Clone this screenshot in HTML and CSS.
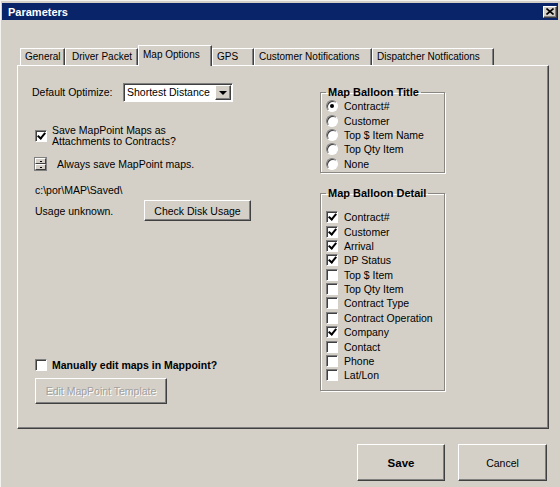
FILE: index.html
```html
<!DOCTYPE html>
<html>
<head>
    <title>Parameters</title>
    <link rel="stylesheet" href="styles.css">
</head>
<body>
    <div class="window">
        <div class="titlebar">
            <span class="title">Parameters</span>
            <span class="close-btn">
                <svg width="8" height="7" viewBox="0 0 8 7"><path d="M0.5 0.5 L7.5 6.5 M7.5 0.5 L0.5 6.5" stroke="#000" stroke-width="1.6"/></svg>
            </span>
        </div>
        <div class="content">
            <div class="tabs">
                <div class="tab tab-general">General</div>
                <div class="tab tab-driver">Driver Packet</div>
                <div class="tab tab-map active">Map Options</div>
                <div class="tab tab-gps">GPS</div>
                <div class="tab tab-customer">Customer Notifications</div>
                <div class="tab tab-dispatcher">Dispatcher Notfications</div>
            </div>
            <div class="panel">
                <div class="left-col">
                    <div class="optimize-row">
                        <span class="field-label">Default Optimize:</span>
                        <div class="select">
                            <span class="select-value">Shortest Distance</span>
                            <span class="select-arrow"></span>
                        </div>
                    </div>
                    <div class="check-row attach-row">
                        <span class="chk on"></span>
                        <span class="check-text">Save MapPoint Maps as<br>Attachments to Contracts?</span>
                    </div>
                    <div class="spin-row">
                        <span class="spinner">
                            <span class="spin-btn spin-up"></span>
                            <span class="spin-btn spin-down"></span>
                        </span>
                        <span>Always save MapPoint maps.</span>
                    </div>
                    <div class="path-text">c:\por\MAP\Saved\</div>
                    <div class="usage-row">
                        <span class="usage-text">Usage unknown.</span>
                        <button class="btn btn-disk">Check Disk Usage</button>
                    </div>
                    <div class="check-row manual-row">
                        <span class="chk"></span>
                        <span class="bold-text">Manually edit maps in Mappoint?</span>
                    </div>
                    <button class="btn btn-template" disabled>Edit MapPoint Template</button>
                </div>
                <div class="right-col">
                    <fieldset class="group group-title">
                        <legend>Map Balloon Title</legend>
                        <div class="opt"><span class="radio on"></span>Contract#</div>
                        <div class="opt"><span class="radio"></span>Customer</div>
                        <div class="opt"><span class="radio"></span>Top $ Item Name</div>
                        <div class="opt"><span class="radio"></span>Top Qty Item</div>
                        <div class="opt"><span class="radio"></span>None</div>
                    </fieldset>
                    <fieldset class="group group-detail">
                        <legend>Map Balloon Detail</legend>
                        <div class="opt"><span class="chk on"></span>Contract#</div>
                        <div class="opt"><span class="chk on"></span>Customer</div>
                        <div class="opt"><span class="chk on"></span>Arrival</div>
                        <div class="opt"><span class="chk on"></span>DP Status</div>
                        <div class="opt"><span class="chk"></span>Top $ Item</div>
                        <div class="opt"><span class="chk"></span>Top Qty Item</div>
                        <div class="opt"><span class="chk"></span>Contract Type</div>
                        <div class="opt"><span class="chk"></span>Contract Operation</div>
                        <div class="opt"><span class="chk on"></span>Company</div>
                        <div class="opt"><span class="chk"></span>Contact</div>
                        <div class="opt"><span class="chk"></span>Phone</div>
                        <div class="opt"><span class="chk"></span>Lat/Lon</div>
                    </fieldset>
                </div>
            </div>
            <div class="footer">
                <button class="btn btn-save">Save</button>
                <button class="btn btn-cancel">Cancel</button>
            </div>
        </div>
    </div>
</body>
</html>
```

FILE: styles.css
```css
body {
    margin: 0;
    padding: 0;
    width: 560px;
    height: 487px;
    overflow: hidden;
    background-color: #d4d0c8;
    font-family: 'Liberation Sans', Arial, sans-serif;
    font-size: 10.5px;
    color: #000;
}

.window {
    height: 487px;
    box-sizing: border-box;
    border-top: 1px solid #f4f3ef;
    border-left: 1px solid #f4f3ef;
    padding: 2px 2px 0 1px;
}

.titlebar {
    height: 17px;
    background-color: #0a246a;
    display: flex;
    align-items: center;
    justify-content: space-between;
    padding: 0 1px 0 6px;
}

.title {
    color: #fff;
    font-weight: bold;
    font-size: 11px;
}

.close-btn {
    width: 14px;
    height: 12px;
    box-sizing: border-box;
    background-color: #d4d0c8;
    border: 1px solid;
    border-color: #fff #404040 #404040 #fff;
    box-shadow: inset -1px -1px #808080;
    display: flex;
    align-items: center;
    justify-content: center;
}

.content {
    padding-left: 15px;
}

/* tabs */
.tabs {
    display: flex;
    align-items: flex-end;
    height: 20px;
    margin-top: 25px;
    margin-left: 3px;
    position: relative;
    z-index: 1;
}

.tab {
    height: 17px;
    box-sizing: border-box;
    padding-left: 4px;
    font-size: 10px;
    line-height: 16px;
    border-top: 1px solid #fff;
    border-left: 1px solid #fff;
    border-right: 1px solid #404040;
    box-shadow: inset -1px 0 #808080;
    white-space: nowrap;
}

.tab.active {
    height: 21px;
    margin-bottom: -1px;
    line-height: 18px;
    background-color: #d4d0c8;
}

.tab-general { width: 45px; }
.tab-driver { width: 73px; padding-left: 6px; }
.tab-map { width: 74px; }
.tab-gps { width: 42px; }
.tab-customer { width: 118px; }
.tab-dispatcher { width: 122px; }

/* panel */
.panel {
    width: 532px;
    height: 364px;
    box-sizing: border-box;
    border: 1px solid;
    border-color: #fff #404040 #404040 #fff;
    box-shadow: inset -1px -1px #808080;
    display: flex;
    padding: 0 103px 24px 14px;
}

.left-col {
    flex: 1;
    display: flex;
    flex-direction: column;
    align-items: flex-start;
}

.right-col {
    width: 125px;
}

.optimize-row {
    display: flex;
    align-items: center;
    margin-top: 17px;
    height: 18px;
}

.field-label {
    width: 91px;
}

.select {
    width: 110px;
    height: 19px;
    box-sizing: border-box;
    background-color: #fff;
    border: 1px solid;
    border-color: #808080 #fff #fff #808080;
    box-shadow: inset 1px 1px #404040;
    display: flex;
    align-items: center;
    justify-content: space-between;
    padding: 1px 1px 1px 3px;
}

.select-value {
    line-height: 14px;
}

.select-arrow {
    width: 16px;
    height: 15px;
    box-sizing: border-box;
    background-color: #d4d0c8;
    border: 1px solid;
    border-color: #fff #404040 #404040 #fff;
    box-shadow: inset -1px -1px #808080;
    position: relative;
}

.select-arrow::after {
    content: '';
    position: absolute;
    left: 3px;
    top: 5px;
    border-left: 4px solid transparent;
    border-right: 4px solid transparent;
    border-top: 4px solid #000;
}

.check-row {
    display: flex;
    align-items: center;
    margin-left: 3px;
}

.attach-row {
    margin-top: 24px;
}

.check-text {
    line-height: 11px;
    margin-left: 5px;
}

.chk {
    width: 12px;
    height: 12px;
    box-sizing: border-box;
    background-color: #fff;
    border: 1px solid;
    border-color: #808080 #fff #fff #808080;
    box-shadow: inset 1px 1px #404040;
    position: relative;
    flex-shrink: 0;
}

.chk.on::after {
    content: '';
    position: absolute;
    left: 3px;
    top: 0px;
    width: 3px;
    height: 6px;
    border-right: 2px solid #000;
    border-bottom: 2px solid #000;
    transform: rotate(40deg);
}

.spin-row {
    display: flex;
    align-items: center;
    margin-top: 10px;
    margin-left: 2px;
}

.spinner {
    width: 13px;
    height: 14px;
    box-sizing: border-box;
    border: 1px solid #808080;
    display: flex;
    flex-direction: column;
    margin-right: 10px;
}

.spin-btn {
    flex: 1;
    box-sizing: border-box;
    border: 1px solid;
    border-color: #fff #404040 #404040 #fff;
    position: relative;
}

.spin-btn::after {
    content: '';
    position: absolute;
    left: 4px;
    top: 2px;
    width: 2px;
    height: 1px;
    background-color: #000;
}

.path-text {
    margin-top: 13px;
    margin-left: 3px;
    line-height: 13px;
}

.usage-row {
    display: flex;
    align-items: center;
    margin-top: 3px;
    margin-left: 3px;
}

.usage-text {
    width: 109px;
}

.btn {
    font-family: 'Liberation Sans', Arial, sans-serif;
    font-size: 10.5px;
    color: #000;
    background-color: #d4d0c8;
    border: 1px solid;
    border-color: #fff #404040 #404040 #fff;
    box-shadow: inset -1px -1px #808080;
    padding: 0;
    box-sizing: border-box;
}

.btn-disk {
    width: 107px;
    height: 21px;
}

.manual-row {
    margin-top: auto;
}

.bold-text {
    font-weight: bold;
    margin-left: 5px;
    line-height: 12px;
}

.btn-template {
    width: 132px;
    height: 26px;
    margin-top: 7px;
    margin-left: 3px;
    color: #a0a0a0;
    text-shadow: 1px 1px #fff;
}

/* group boxes */
.group {
    margin: 0;
    border: 1px solid #8a8782;
    box-shadow: 1px 1px #fff, inset 1px 1px #fff;
    padding: 0 0 1px 5px;
}

.group legend {
    font-weight: bold;
    font-size: 11px;
    padding: 0 2px;
    line-height: 13px;
}

.group-title {
    margin-top: 20px;
}

.group-detail {
    margin-top: 14px;
    padding-top: 10px;
    padding-bottom: 7px;
}

.opt {
    height: 14.4px;
    display: flex;
    align-items: center;
    white-space: nowrap;
}

.opt .chk,
.opt .radio {
    margin-right: 6px;
}

.radio {
    width: 12px;
    height: 12px;
    box-sizing: border-box;
    border-radius: 50%;
    background-color: #fff;
    border: 1px solid;
    border-color: #808080 #fff #fff #808080;
    box-shadow: inset 1px 1px #404040;
    position: relative;
    flex-shrink: 0;
}

.radio.on::after {
    content: '';
    position: absolute;
    left: 3px;
    top: 3px;
    width: 4px;
    height: 4px;
    border-radius: 50%;
    background-color: #000;
}

/* footer */
.footer {
    display: flex;
    justify-content: flex-end;
    gap: 13px;
    width: 532px;
    margin-top: 15px;
}

.btn-save,
.btn-cancel {
    height: 37px;
    width: 89px;
}

.btn-save {
    width: 88px;
    font-weight: bold;
    font-size: 11.5px;
}

.btn-cancel {
    margin-right: 2px;
}
```
